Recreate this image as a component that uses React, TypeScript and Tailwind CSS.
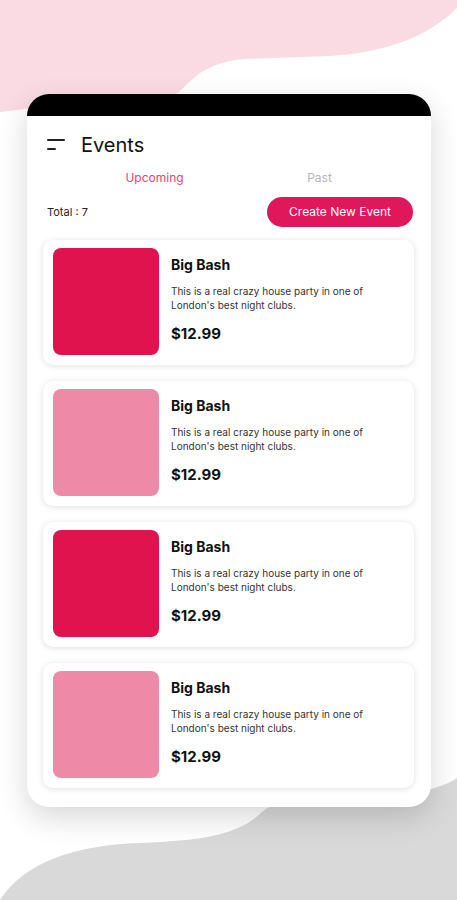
import React from "react";

type EventItem = { title: string; desc: string; price: string; color: string };

const events: EventItem[] = [
  { title: "Big Bash", desc: "This is a real crazy house party in one of London's best night clubs.", price: "$12.99", color: "bg-[#e0134f]" },
  { title: "Big Bash", desc: "This is a real crazy house party in one of London's best night clubs.", price: "$12.99", color: "bg-[#ee8aa8]" },
  { title: "Big Bash", desc: "This is a real crazy house party in one of London's best night clubs.", price: "$12.99", color: "bg-[#e0134f]" },
  { title: "Big Bash", desc: "This is a real crazy house party in one of London's best night clubs.", price: "$12.99", color: "bg-[#ee8aa8]" },
];

function Backdrop() {
  // decorative blobs behind the phone
  return (
    <svg className="absolute inset-0" width="457" height="900" viewBox="0 0 457 900">
      <path
        d="M0,0 H457 V8 C430,35 390,52 330,56 L245,59 C205,62 192,80 178,93 C150,106 90,100 0,112 Z"
        fill="#fadbe3"
      />
      <path
        d="M0,900 C25,862 75,845 140,843 C205,841 240,834 262,812 C285,792 340,800 395,796 C425,792 445,786 457,778 V900 Z"
        fill="#d9d9d9"
      />
    </svg>
  );
}

function EventCard({ item }: { item: EventItem }) {
  return (
    <div className="flex h-[125px] rounded-[10px] bg-white pl-[10px] pt-[8px] shadow-[0_1px_6px_rgba(0,0,0,0.13)]">
      <div className={`h-[107px] w-[106px] shrink-0 rounded-[8px] ${item.color}`} />
      <div className="ml-[12px] flex flex-col pt-[7px] pr-[12px]">
        <span className="text-[14px] font-bold leading-[20px] text-[#111]">{item.title}</span>
        <p className="mt-[9px] w-[205px] text-[10px] leading-[14px] text-[#333]">{item.desc}</p>
        <span className="mt-[11px] text-[15px] font-bold leading-[22px] text-[#111]">{item.price}</span>
      </div>
    </div>
  );
}

export default function App() {
  return (
    <div className="relative h-[900px] w-[457px] overflow-hidden bg-white font-['Inter','Noto_Sans',sans-serif]">
      <Backdrop />
      <div className="relative px-[27px] pt-[94px]">
        <div className="flex h-[713px] w-[404px] flex-col overflow-hidden rounded-[22px] bg-white shadow-[0_10px_30px_rgba(0,0,0,0.16)]">
          <div className="h-[22px] shrink-0 bg-black" />

          {/* header */}
          <div className="mt-[15px] flex h-[28px] items-center pl-[20px]">
            <svg width="18" height="12" viewBox="0 0 18 12">
              <rect x="0" y="0" width="18" height="2" rx="1" fill="#222" />
              <rect x="0" y="9" width="9" height="2" rx="1" fill="#222" />
            </svg>
            <span className="ml-[16px] text-[20px] leading-[28px] text-[#111]">Events</span>
          </div>

          {/* tabs */}
          <div className="ml-[45px] mt-[10px] grid w-[330px] grid-cols-2 text-center text-[12px] leading-[18px]">
            <span className="text-[#e0447a]">Upcoming</span>
            <span className="text-[#b5b5b5]">Past</span>
          </div>

          {/* total + button */}
          <div className="mt-[10px] flex items-center justify-between pl-[20px] pr-[18px]">
            <span className="text-[11px] text-[#222]">Total : 7</span>
            <button className="h-[30px] w-[146px] rounded-full bg-[#e0175a] text-[12px] text-white">
              Create New Event
            </button>
          </div>

          {/* list */}
          <div className="ml-[16px] mr-[17px] mt-[13px] flex flex-col gap-[16px]">
            {events.map((e, i) => (
              <EventCard key={i} item={e} />
            ))}
          </div>
        </div>
      </div>
    </div>
  );
}
